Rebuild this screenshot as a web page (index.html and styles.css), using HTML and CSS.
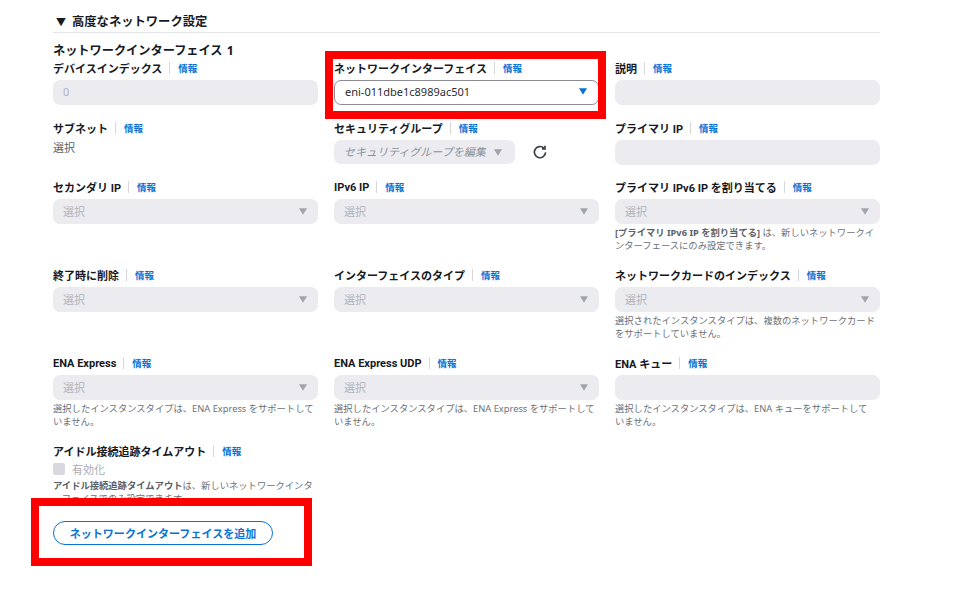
FILE: index.html
```html
<!DOCTYPE html>
<html lang="ja">
<head>
<meta charset="utf-8">
<title>高度なネットワーク設定</title>
<link rel="stylesheet" href="styles.css">
</head>
<body>
<main class="panel">
  <h2 class="section-title"><span class="caret">▼</span>高度なネットワーク設定</h2>
  <h3 class="nic-title">ネットワークインターフェイス 1</h3>
  <div class="grid">
    <div class="field">
      <div class="label">デバイスインデックス<span class="sep"></span><a class="info">情報</a></div>
      <div class="control">0</div>
    </div>
    <div class="field">
      <div class="label">ネットワークインターフェイス<span class="sep"></span><a class="info">情報</a></div>
      <div class="control active">eni-011dbe1c8989ac501<svg class="arrow" viewBox="0 0 10 8"><path d="M0 0H10L5 8Z"/></svg></div>
    </div>
    <div class="field">
      <div class="label">説明<span class="sep"></span><a class="info">情報</a></div>
      <div class="control"></div>
    </div>

    <div class="field">
      <div class="label">サブネット<span class="sep"></span><a class="info">情報</a></div>
      <div class="plain">選択</div>
    </div>
    <div class="field">
      <div class="label">セキュリティグループ<span class="sep"></span><a class="info">情報</a></div>
      <div class="sg-row">
        <div class="control sg"><em>セキュリティグループを編集</em><svg class="arrow" viewBox="0 0 10 8"><path d="M0 0H10L5 8Z"/></svg></div>
        <svg class="refresh" viewBox="0 0 14 14"><path d="M12.6 7.4a5.6 5.6 0 1 1-1.8-4.4"/><path d="M12 .8v3H9"/></svg>
      </div>
    </div>
    <div class="field">
      <div class="label">プライマリ IP<span class="sep"></span><a class="info">情報</a></div>
      <div class="control"></div>
    </div>

    <div class="field">
      <div class="label">セカンダリ IP<span class="sep"></span><a class="info">情報</a></div>
      <div class="control">選択<svg class="arrow" viewBox="0 0 10 8"><path d="M0 0H10L5 8Z"/></svg></div>
    </div>
    <div class="field">
      <div class="label">IPv6 IP<span class="sep"></span><a class="info">情報</a></div>
      <div class="control">選択<svg class="arrow" viewBox="0 0 10 8"><path d="M0 0H10L5 8Z"/></svg></div>
    </div>
    <div class="field">
      <div class="label">プライマリ IPv6 IP を割り当てる<span class="sep"></span><a class="info">情報</a></div>
      <div class="control">選択<svg class="arrow" viewBox="0 0 10 8"><path d="M0 0H10L5 8Z"/></svg></div>
      <p class="help"><b>[プライマリ IPv6 IP を割り当てる]</b> は、新しいネットワークインターフェースにのみ設定できます。</p>
    </div>

    <div class="field">
      <div class="label">終了時に削除<span class="sep"></span><a class="info">情報</a></div>
      <div class="control">選択<svg class="arrow" viewBox="0 0 10 8"><path d="M0 0H10L5 8Z"/></svg></div>
    </div>
    <div class="field">
      <div class="label">インターフェイスのタイプ<span class="sep"></span><a class="info">情報</a></div>
      <div class="control">選択<svg class="arrow" viewBox="0 0 10 8"><path d="M0 0H10L5 8Z"/></svg></div>
    </div>
    <div class="field">
      <div class="label">ネットワークカードのインデックス<span class="sep"></span><a class="info">情報</a></div>
      <div class="control">選択<svg class="arrow" viewBox="0 0 10 8"><path d="M0 0H10L5 8Z"/></svg></div>
      <p class="help">選択されたインスタンスタイプは、複数のネットワークカードをサポートしていません。</p>
    </div>

    <div class="field">
      <div class="label">ENA Express<span class="sep"></span><a class="info">情報</a></div>
      <div class="control">選択<svg class="arrow" viewBox="0 0 10 8"><path d="M0 0H10L5 8Z"/></svg></div>
      <p class="help">選択したインスタンスタイプは、ENA Express をサポートしていません。</p>
    </div>
    <div class="field">
      <div class="label">ENA Express UDP<span class="sep"></span><a class="info">情報</a></div>
      <div class="control">選択<svg class="arrow" viewBox="0 0 10 8"><path d="M0 0H10L5 8Z"/></svg></div>
      <p class="help">選択したインスタンスタイプは、ENA Express をサポートしていません。</p>
    </div>
    <div class="field">
      <div class="label">ENA キュー<span class="sep"></span><a class="info">情報</a></div>
      <div class="control"></div>
      <p class="help">選択したインスタンスタイプは、ENA キューをサポートして<br>いません。</p>
    </div>

    <div class="field">
      <div class="label">アイドル接続追跡タイムアウト<span class="sep"></span><a class="info">情報</a></div>
      <div class="check"><span class="box"></span>有効化</div>
      <p class="help"><b>アイドル接続追跡タイムアウト</b>は、新しいネットワークインターフェイスでのみ設定できます。</p>
    </div>
  </div>
</main>
<div class="mark mark-nic"></div>
<div class="mark mark-add"><button class="add-btn">ネットワークインターフェイスを追加</button></div>
</body>
</html>
```

FILE: styles.css
```css
* { box-sizing: border-box; }
html, body { margin: 0; padding: 0; background: #fff; }
body {
  width: 970px;
  height: 589px;
  overflow: hidden;
  position: relative;
  font-family: "Noto Sans", "Noto Sans CJK JP", sans-serif;
  font-size: 11px;
  color: #16191f;
}
.panel { padding: 13px 90px 0 53px; }
.section-title {
  margin: 0;
  height: 20px;
  line-height: 17px;
  font-size: 12.3px;
  font-weight: 700;
  border-bottom: 1.5px solid #e4e5e8;
}
.caret { display: inline-block; width: 19px; padding-left: 3px; font-size: 10px; }
.nic-title {
  margin: 9px 0 0;
  font-size: 12.2px;
  line-height: 18px;
  font-weight: 700;
  word-spacing: 1px;
}
.grid {
  display: grid;
  grid-template-columns: repeat(3, 265px);
  column-gap: 16px;
  row-gap: 15px;
  padding-top: 0.5px;
}
.label {
  display: flex;
  align-items: center;
  height: 15px;
  margin-bottom: 4.5px;
  font-family: "Roboto", "Noto Sans CJK JP", sans-serif;
  font-weight: 700;
  white-space: nowrap;
}
.sep { width: 1px; height: 12px; margin: 0 8px 0 7px; background: #d8d8dc; }
.info { color: #0972d3; font-size: 9.5px; font-weight: 700; }
.control {
  position: relative;
  display: flex;
  align-items: center;
  height: 25px;
  padding: 0 10px 2px;
  border-radius: 7px;
  background: #ebebf0;
  color: #b0b4bc;
}
.control.active {
  background: #fff;
  border: 1px solid #8c8c94;
  color: #2a2e33;
}
.arrow { position: absolute; right: 11px; top: 9px; width: 8px; height: 7px; fill: #a0a4ac; }
.active .arrow { top: 7px; fill: #0972d3; }
.plain { line-height: 16px; margin-top: 2px; color: #5a5f68; }
.sg-row { display: flex; align-items: center; gap: 18px; }
.control.sg { width: 181px; height: 24px; }
.control.sg em { font-style: italic; color: #8c919b; }
.control.sg .arrow { right: 13px; top: 9px; }
.refresh { width: 14px; height: 14px; fill: none; stroke: #3a3f47; stroke-width: 1.7; }
.help {
  margin: 1.5px 0 0;
  padding: 0 3px 1px 0;
  font-size: 9.3px;
  line-height: 13px;
  color: #6b7078;
}
.help b { font-weight: 700; color: #5a5f68; }
.check { display: flex; align-items: center; gap: 7px; height: 14px; padding-bottom: 2px; color: #a9adb5; }
.box { width: 12px; height: 12px; border-radius: 2px; background: #d8d8de; }
.mark { position: absolute; border: 8px solid #ff0000; }
.mark-nic { left: 325px; top: 51px; width: 281px; height: 68px; }
.mark-add { left: 31px; top: 498px; width: 281px; height: 68px; background: #fff; padding: 15px 0 0 14px; }
.add-btn {
  display: block;
  width: 220px;
  height: 24px;
  padding: 0;
  border: 1px solid #0972d3;
  border-radius: 12px;
  background: #fff;
  color: #0972d3;
  font: 700 11px "Noto Sans", "Noto Sans CJK JP", sans-serif;
  letter-spacing: 0.03px;
}
```
